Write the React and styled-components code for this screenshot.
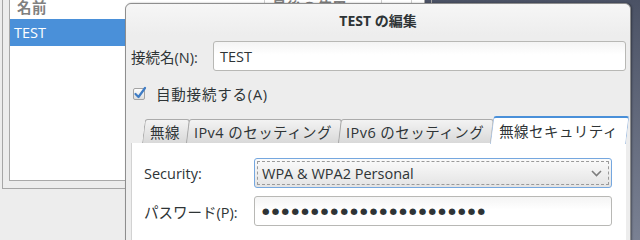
import React from "react";
import styled, { createGlobalStyle } from "styled-components";

const GlobalStyle = createGlobalStyle`
  html, body {
    margin: 0;
    padding: 0;
    overflow: hidden;
    background: #4f5668;
  }
  body {
    font-family: "Open Sans", "Noto Sans CJK JP", sans-serif;
    font-size: 14.5px;
    color: #2e3436;
  }
`;

export default function App() {
  return (
    <>
      <GlobalStyle />
      <Desktop>
        <BackWindow>
          <ListFrame>
            <Tree>
              <TreeHeader>
                <HeaderCell $width={255}>名前</HeaderCell>
                <HeaderCell $width={117}>最後の使用</HeaderCell>
                <HeaderCell $width={30}></HeaderCell>
              </TreeHeader>
              <TreeRow $selected>TEST</TreeRow>
            </Tree>
          </ListFrame>
        </BackWindow>

        <Dialog>
          <TitleBar>TEST の編集</TitleBar>
          <DialogBody>
            <NameRow>
              <Label>接続名(N):</Label>
              <Entry>TEST</Entry>
            </NameRow>
            <CheckRow>
              <CheckBox />
              <span>自動接続する(A)</span>
            </CheckRow>
            <Notebook>
              <TabStrip>
                <Tab>無線</Tab>
                <Tab>IPv4 のセッティング</Tab>
                <Tab>IPv6 のセッティング</Tab>
                <Tab $active>無線セキュリティ</Tab>
              </TabStrip>
              <Panel>
                <FormGrid>
                  <Label>Security:</Label>
                  <Combo>
                    <span>WPA &amp; WPA2 Personal</span>
                    <Chevron />
                  </Combo>
                  <Label>パスワード(P):</Label>
                  <Entry $mono>{"●".repeat(23)}</Entry>
                </FormGrid>
              </Panel>
            </Notebook>
          </DialogBody>
        </Dialog>
      </Desktop>
    </>
  );
}

function CheckBox() {
  return (
    <svg width="16" height="16" viewBox="0 0 16 16">
      <defs>
        <linearGradient id="cbg" x1="0" y1="0" x2="0" y2="1">
          <stop offset="0" stopColor="#ffffff" />
          <stop offset="1" stopColor="#dcdcdc" />
        </linearGradient>
      </defs>
      <rect x="1.5" y="3.5" width="11" height="11" rx="1.5" fill="url(#cbg)" stroke="#a3a3a3" />
      <path d="M3.5 9 L6.5 12 L13 3" fill="none" stroke="#3f7cc4" strokeWidth="2.2" strokeLinecap="round" strokeLinejoin="round" />
    </svg>
  );
}

function Chevron() {
  return (
    <svg width="11" height="7" viewBox="0 0 11 7">
      <path d="M1 1 L5.5 5.5 L10 1" fill="none" stroke="#7d7d7d" strokeWidth="1.6" />
    </svg>
  );
}

const Desktop = styled.div`
  position: relative;
  width: 640px;
  height: 240px;
  overflow: hidden;
  background: linear-gradient(#4b5265, #7a8193);
`;

const BackWindow = styled.div`
  position: absolute;
  left: 0;
  top: -21px;
  width: 417px;
  height: 280px;
  background: #ededed;
  border-right: 1px solid #9b9b9b;
  box-sizing: border-box;
`;

const ListFrame = styled.div`
  margin-left: 2px;
  width: 430px;
  height: 210px;
  box-sizing: border-box;
  border: 1px solid #a6a6a6;
  border-top: none;
  padding: 7px 6px 7px 6px;
`;

const Tree = styled.div`
  height: 100%;
  box-sizing: border-box;
  border: 1px solid #a9a9a9;
  background: #ffffff;
`;

const TreeHeader = styled.div`
  display: flex;
  height: 32px;
  padding-top: 6px;
  box-sizing: border-box;
`;

const HeaderCell = styled.div`
  width: ${(p) => p.$width}px;
  flex: none;
  display: flex;
  align-items: center;
  padding-left: 7px;
  box-sizing: border-box;
  border-right: 1px solid #cfcfcf;
  color: #808080;
  font-weight: bold;
  letter-spacing: 0.5px;
`;

const TreeRow = styled.div`
  height: 27px;
  display: flex;
  align-items: center;
  padding-left: 4px;
  background: ${(p) => (p.$selected ? "#4a90d9" : "transparent")};
  color: ${(p) => (p.$selected ? "#ffffff" : "#2e3436")};
`;

const Dialog = styled.div`
  position: absolute;
  left: 125px;
  top: 3px;
  width: 506px;
  height: 270px;
  box-sizing: border-box;
  background: #ededed;
  border: 1px solid #8e8e8e;
  border-radius: 6px 6px 0 0;
  box-shadow: 1px 0 2px rgba(0, 0, 0, 0.35);
  display: flex;
  flex-direction: column;
  overflow: hidden;
`;

const TitleBar = styled.div`
  height: 31px;
  flex: none;
  display: flex;
  align-items: center;
  justify-content: center;
  font-weight: bold;
  font-size: 14px;
  color: #2e3436;
  border-radius: 6px 6px 0 0;
  background: linear-gradient(#f6f6f6, #ededed);
`;

const DialogBody = styled.div`
  padding: 6px 4px 0 5px;
  display: flex;
  flex-direction: column;
`;

const NameRow = styled.div`
  display: flex;
  align-items: center;
  height: 30px;
  & > span:first-child {
    width: 82px;
  }
`;

const Label = styled.span`
  white-space: nowrap;
  flex: none;
`;

const Entry = styled.div`
  flex: 1;
  height: 30px;
  box-sizing: border-box;
  display: flex;
  align-items: center;
  padding-left: ${(p) => (p.$mono ? 7 : 6)}px;
  border: 1px solid #b8b8b5;
  border-radius: 3px;
  background: linear-gradient(#f4f4f4, #ffffff 45%);
  color: #2e3436;
  overflow: hidden;
  white-space: nowrap;
  ${(p) =>
    p.$mono &&
    `
    font-family: "DejaVu Sans", sans-serif;
    font-size: 8.6px;
    letter-spacing: 2.3px;
    color: #2e3436;
  `}
`;

const CheckRow = styled.label`
  display: flex;
  align-items: center;
  gap: 8px;
  height: 20px;
  margin-top: 12px;
  padding-left: 1px;
  letter-spacing: 0.8px;
`;

const Notebook = styled.div`
  margin-top: 14px;
  display: flex;
  flex-direction: column;
`;

const TabStrip = styled.div`
  display: flex;
  align-items: flex-end;
  height: 26px;
  padding-left: 11px;
  position: relative;
  z-index: 2;
`;

const Tab = styled.div`
  position: relative;
  z-index: ${(p) => (p.$active ? 3 : 1)};
  height: ${(p) => (p.$active ? 27 : 24)}px;
  margin-bottom: ${(p) => (p.$active ? -1 : 0)}px;
  margin-right: ${(p) => (p.$active ? 0 : -1)}px;
  flex: none;
  display: flex;
  align-items: center;
  padding: ${(p) => (p.$active ? "1px 8px 0 9px" : "0 7px 0 8px")};
  white-space: nowrap;
  letter-spacing: 0.45px;
  color: #2e3436;
  &::before {
    content: "";
    position: absolute;
    inset: 0;
    z-index: -1;
    transform: skewX(-7deg);
    transform-origin: bottom left;
    border: 1px solid ${(p) => (p.$active ? "#a9c3e3" : "#ababab")};
    border-bottom: none;
    border-top: ${(p) => (p.$active ? "2px solid #4a90d9" : "1px solid #ababab")};
    border-radius: 3px 3px 0 0;
    background: ${(p) =>
      p.$active ? "#ffffff" : "linear-gradient(#f3f3f3, #d9d9d9)"};
  }
`;

const Panel = styled.div`
  background: #ffffff;
  border-left: 1px solid #d2d2d2;
  padding: 15px 14px 20px 12px;
  position: relative;
  z-index: 1;
`;

const FormGrid = styled.div`
  display: grid;
  grid-template-columns: 110px 1fr;
  row-gap: 8px;
  align-items: center;
`;

const Combo = styled.div`
  position: relative;
  height: 30px;
  box-sizing: border-box;
  display: flex;
  align-items: center;
  justify-content: space-between;
  padding: 0 9px 0 7px;
  border: 1px solid #75a7df;
  border-radius: 3px;
  background: linear-gradient(#fbfbfb, #e3e3e3);
  &::after {
    content: "";
    position: absolute;
    inset: 2px;
    border: 1px dashed #9a9a9a;
    border-radius: 1px;
    pointer-events: none;
  }
`;
